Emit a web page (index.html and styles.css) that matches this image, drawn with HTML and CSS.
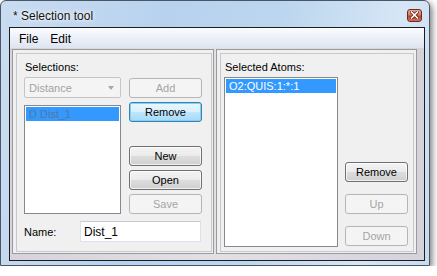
FILE: index.html
```html
<!DOCTYPE html>
<html lang="en">
<head>
    <meta charset="UTF-8">
    <title>Selection tool</title>
    <link rel="stylesheet" href="styles.css">
</head>
<body>
    <div class="window">
        <div class="titlebar">
            <span class="title">* Selection tool</span>
            <span class="close-btn">
                <svg width="9" height="8" viewBox="0 0 9 8">
                    <path d="M1.5 1 L7.5 7 M7.5 1 L1.5 7" stroke="#5b2a20" stroke-width="3.2" stroke-linecap="square"/>
                    <path d="M1.5 1 L7.5 7 M7.5 1 L1.5 7" stroke="#fff" stroke-width="1.6" stroke-linecap="square"/>
                </svg>
            </span>
        </div>
        <div class="client">
            <div class="menubar">
                <span class="menu-item">File</span>
                <span class="menu-item">Edit</span>
            </div>
            <div class="panes">
                <div class="pane pane-left">
                    <div class="pane-body">
                        <div class="cols">
                            <div class="col-main">
                                <div class="label">Selections:</div>
                                <div class="combo">
                                    <span>Distance</span>
                                    <span class="combo-arrow"></span>
                                </div>
                                <div class="listbox list-selections">
                                    <div class="list-row row-dim">D Dist_1</div>
                                </div>
                            </div>
                            <div class="col-buttons col-left-buttons">
                                <button class="btn" disabled>Add</button>
                                <button class="btn btn-default">Remove</button>
                                <button class="btn btn-gap">New</button>
                                <button class="btn">Open</button>
                                <button class="btn" disabled>Save</button>
                            </div>
                        </div>
                        <div class="name-row">
                            <label for="selName">Name:</label>
                            <input type="text" id="selName" value="Dist_1">
                        </div>
                    </div>
                </div>
                <div class="pane pane-right">
                    <div class="pane-body">
                        <div class="label">Selected Atoms:</div>
                        <div class="cols">
                            <div class="listbox list-atoms">
                                <div class="list-row">O2:QUIS:1:*:1</div>
                            </div>
                            <div class="col-buttons col-right-buttons">
                                <button class="btn">Remove</button>
                                <button class="btn" disabled>Up</button>
                                <button class="btn" disabled>Down</button>
                            </div>
                        </div>
                    </div>
                </div>
            </div>
        </div>
    </div>
</body>
</html>
```

FILE: styles.css
```css
body {
    margin: 0;
    background-color: #fff;
    font-family: 'Liberation Sans', Arial, sans-serif;
    font-size: 11px;
    color: #000;
}

.window {
    width: 430px;
    height: 266px;
    box-sizing: border-box;
    border: 1px solid #4a5566;
    border-radius: 6px 6px 0 0;
    padding: 0 4px 4px 8px;
    background: linear-gradient(100deg, #c9dcf1 0%, #b8d2ee 35%, #bcd6ef 60%, #d6e6f6 85%, #c7dbf0 100%);
    box-shadow: 2px 3px 7px rgba(0, 0, 0, 0.55);
    display: flex;
    flex-direction: column;
}

.titlebar {
    height: 26px;
    display: flex;
    align-items: center;
    justify-content: space-between;
}

.title {
    margin-left: 4px;
    margin-top: 3px;
    font-size: 12px;
    color: #111;
    text-shadow: 0 0 6px #fff, 0 0 3px #fff;
}

.close-btn {
    width: 15px;
    height: 13px;
    box-sizing: border-box;
    margin-right: 3px;
    margin-top: 2px;
    border: 1px solid #6b2a1e;
    border-radius: 3px;
    background: linear-gradient(#eba999 0%, #d8765f 45%, #c4452c 55%, #d7705a 100%);
    display: flex;
    align-items: center;
    justify-content: center;
}

.client {
    flex: 1;
    border: 1px solid #1d1d1d;
    display: flex;
    flex-direction: column;
    background-color: #dcd9e2;
}

.menubar {
    height: 20px;
    display: flex;
    align-items: center;
    padding-left: 3px;
    background: linear-gradient(#fbfcfe 0%, #eef2f9 40%, #dfe5f1 100%);
    font-size: 12px;
}

.menu-item {
    padding: 0 6px;
    margin-top: 1px;
}

.panes {
    flex: 1;
    display: flex;
    gap: 2px;
    padding: 1px 7px 6px 2px;
    background: linear-gradient(90deg, #d7d3dc, #e2dfe7 50%, #d6d2db);
}

.pane {
    border: 1px solid #9a9a9a;
    background-color: #f0f0f0;
    padding: 3px 1px 1px 3px;
    display: flex;
}

.pane-left {
    width: 202px;
    box-sizing: border-box;
}

.pane-right {
    flex: 1;
    padding-right: 2px;
}

.pane-body {
    flex: 1;
    border: 1px solid #c9c9c9;
}

.pane-left .pane-body {
    padding-left: 7px;
}

.pane-right .pane-body {
    padding-left: 3px;
}

.label {
    height: 13px;
    line-height: 13px;
    margin-top: 7px;
    padding-left: 1px;
}

.cols {
    display: flex;
}

.col-main {
    width: 97px;
    display: flex;
    flex-direction: column;
}

.combo {
    height: 21px;
    margin-top: 3px;
    box-sizing: border-box;
    border: 1px solid #c5c5c5;
    border-radius: 2px;
    background-color: #f4f4f4;
    color: #a3a3a3;
    display: flex;
    align-items: center;
    justify-content: space-between;
    padding: 0 6px 0 4px;
}

.combo-arrow {
    width: 0;
    height: 0;
    border-left: 3.5px solid transparent;
    border-right: 3.5px solid transparent;
    border-top: 4px solid #a8a8a8;
}

.listbox {
    box-sizing: border-box;
    border: 1px solid #848890;
    background-color: #fff;
    padding: 1px;
}

.list-selections {
    height: 109px;
    margin-top: 7px;
}

.list-atoms {
    width: 114px;
    height: 170px;
    margin-top: 3px;
}

.list-row {
    height: 14px;
    line-height: 14px;
    background-color: #3399ff;
    color: #fff;
    padding-left: 3px;
    font-size: 11px;
}

.row-dim {
    color: #55779f;
}

.col-buttons {
    display: flex;
    flex-direction: column;
}

.col-left-buttons {
    width: 73px;
    margin-left: 8px;
    padding-top: 24px;
    gap: 4px;
}

.col-right-buttons {
    width: 63px;
    margin-left: 7px;
    padding-top: 88px;
    gap: 12px;
}

.btn {
    height: 20px;
    box-sizing: border-box;
    padding: 0;
    font-family: 'Liberation Sans', Arial, sans-serif;
    font-size: 11px;
    font-weight: normal;
    color: #000;
    border: 1px solid #707070;
    border-radius: 3px;
    background: linear-gradient(#f3f3f3 0%, #ebebeb 48%, #dddddd 52%, #cfcfcf 100%);
    box-shadow: inset 0 0 0 1px rgba(255, 255, 255, 0.7);
}

.btn:disabled {
    border-color: #b5b5b5;
    background: #f4f4f4;
    color: #a5a5a5;
    box-shadow: none;
}

.btn-default {
    border-color: #3c7fb1;
    background: linear-gradient(#eaf6fd 0%, #d9f0fc 48%, #bee6fd 52%, #a7d9f5 100%);
    box-shadow: inset 0 0 0 1px #7fd2f6;
}

.btn-gap {
    margin-top: 20px;
}

.name-row {
    display: flex;
    align-items: center;
    margin-top: 7px;
}

.name-row label {
    width: 56px;
}

.name-row input {
    width: 121px;
    height: 21px;
    box-sizing: border-box;
    margin: 0;
    padding: 0 3px;
    border: 1px solid #dde2e8;
    border-top-color: #c9ccd2;
    font-family: 'Liberation Sans', Arial, sans-serif;
    font-size: 12px;
    color: #000;
    background-color: #fff;
}
```
